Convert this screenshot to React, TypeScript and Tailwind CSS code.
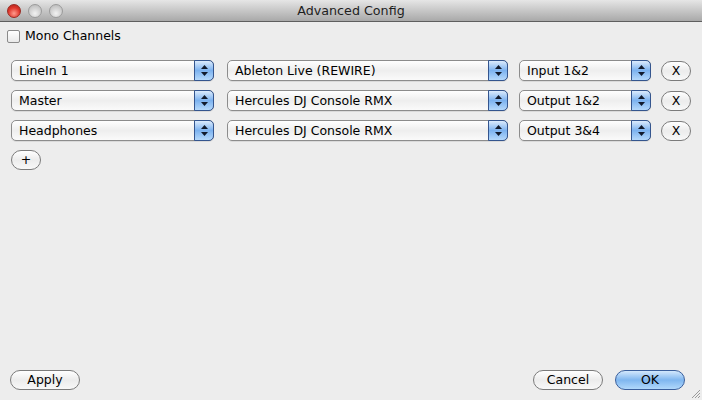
import React from 'react';

type Route = { source: string; device: string; channel: string };

const routes: Route[] = [
  { source: 'LineIn 1', device: 'Ableton Live (REWIRE)', channel: 'Input 1&2' },
  { source: 'Master', device: 'Hercules DJ Console RMX', channel: 'Output 1&2' },
  { source: 'Headphones', device: 'Hercules DJ Console RMX', channel: 'Output 3&4' },
];

const Stepper: React.FC = () => (
  <span className="-my-px -mr-px flex w-[20px] flex-col items-center justify-center gap-[3px] rounded-r-[5px] border border-[#34558e] bg-gradient-to-b from-[#dcebfc] via-[#7cb2ef] to-[#b4d8fb]">
    <svg width="7" height="4" viewBox="0 0 7 4">
      <path d="M3.5 0 L7 4 L0 4 Z" fill="#111a2c" />
    </svg>
    <svg width="7" height="4" viewBox="0 0 7 4">
      <path d="M0 0 L7 0 L3.5 4 Z" fill="#111a2c" />
    </svg>
  </span>
);

const Popup: React.FC<{ label: string; className: string }> = ({ label, className }) => (
  <div
    className={`${className} flex h-[21px] shrink-0 items-stretch rounded-[5px] border border-[#8c8c8c] bg-gradient-to-b from-white via-[#eeeeee] to-[#fafafa] shadow-[0_1px_0_rgba(0,0,0,0.08)]`}
  >
    <span className="flex-1 truncate pl-[7px] text-[12.5px] leading-[19px] text-black">{label}</span>
    <Stepper />
  </div>
);

const PillButton: React.FC<{ children: React.ReactNode; className: string; primary?: boolean }> = ({
  children,
  className,
  primary,
}) => (
  <button
    className={`${className} block h-[20px] shrink-0 rounded-full border text-[12.5px] leading-[18px] text-black ${
      primary
        ? 'border-[#3a5f9c] bg-gradient-to-b from-[#d3e8fc] via-[#7fb6ef] to-[#b0d8fb]'
        : 'border-[#7b7b7b] bg-gradient-to-b from-white via-[#ececec] to-[#f8f8f8]'
    }`}
  >
    {children}
  </button>
);

const Light: React.FC<{ red?: boolean }> = ({ red }) => (
  <span
    className={`h-[14px] w-[14px] rounded-full border ${
      red
        ? 'border-[#9a2a22] bg-[radial-gradient(circle_at_50%_70%,#ff9c8e,#e0372c_55%,#a8221a)]'
        : 'border-[#9b9b9b] bg-[radial-gradient(circle_at_50%_70%,#f2f2f2,#cfcfcf_55%,#b4b4b4)]'
    }`}
  />
);

export default function App() {
  return (
    <div className="relative flex h-[400px] w-[702px] flex-col overflow-hidden bg-[#ededed] font-['DejaVu_Sans',sans-serif] text-black">
      <header className="relative flex h-[22px] shrink-0 items-center border-b border-[#5f5f5f] bg-gradient-to-b from-[#e6e6e6] to-[#a9a9a9]">
        <div className="absolute left-[7px] top-[4px] flex gap-[7px]">
          <Light red />
          <Light />
          <Light />
        </div>
        <h1 className="w-full text-center text-[12.7px] leading-[22px] text-[#1e1e1e]">Advanced Config</h1>
      </header>

      <main className="flex flex-1 flex-col px-[10px] pb-[10px]">
        <label className="mt-[7px] flex h-[14px] items-center gap-[5px]">
          <span className="-ml-[3px] h-[13px] w-[13px] rounded-[2px] border border-[#8a8a8a] bg-gradient-to-b from-white to-[#e9e9e9]" />
          <span className="text-[12.5px] leading-[14px]">Mono Channels</span>
        </label>

        <div className="mt-[17px] flex flex-col gap-[9px]">
          {routes.map((r) => (
            <div key={r.source} className="flex h-[21px] items-center">
              <Popup label={r.source} className="ml-px w-[203px]" />
              <Popup label={r.device} className="ml-[13px] w-[281px]" />
              <Popup label={r.channel} className="ml-[11px] w-[132px]" />
              <PillButton className="ml-[10px] w-[30px]">X</PillButton>
            </div>
          ))}
        </div>

        <div className="mt-[9px] flex pl-px">
          <PillButton className="w-[30px]">+</PillButton>
        </div>

        <footer className="mt-auto flex items-center">
          <PillButton className="w-[70px]">Apply</PillButton>
          <div className="ml-auto mr-[7px] flex gap-[12px]">
            <PillButton className="w-[70px]">Cancel</PillButton>
            <PillButton className="w-[70px]" primary>
              OK
            </PillButton>
          </div>
        </footer>
      </main>

      {/* resize grip */}
      <svg className="absolute bottom-[1px] right-[1px]" width="11" height="11" viewBox="0 0 11 11">
        <path d="M10 2 L2 10 M10 5 L5 10 M10 8 L8 10" stroke="#9a9a9a" strokeWidth="1" />
      </svg>
    </div>
  );
}
